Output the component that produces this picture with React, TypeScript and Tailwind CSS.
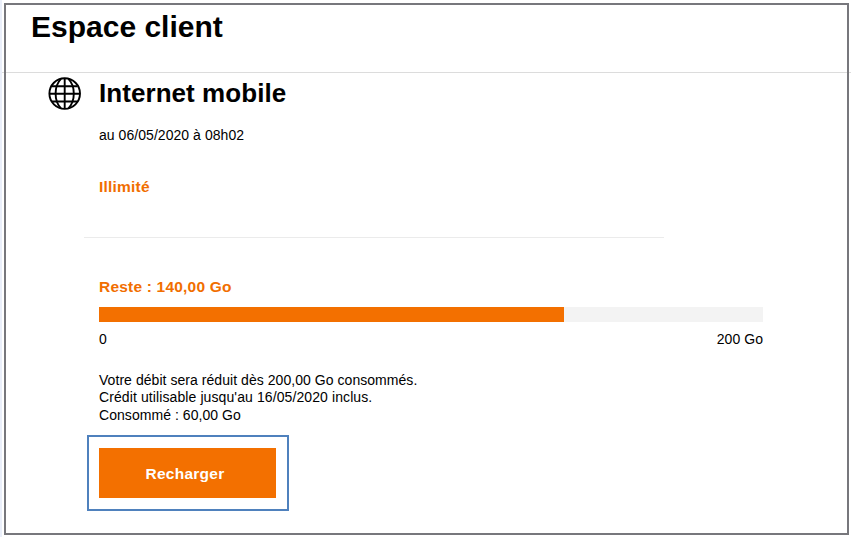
import * as React from 'react'

interface UsageProps {
  remaining: string
  percent: number
  max: string
}

function GlobeIcon() {
  return (
    <svg
      className="size-[34px] shrink-0"
      viewBox="0 0 34 34"
      fill="none"
      stroke="#000"
      strokeWidth="1.9"
    >
      <circle cx="16.7" cy="16.6" r="15.3" />
      <path d="M16.7 1.3v30.6M1.4 16.8h30.6M4 9.2h25.4M4 24.5h25.4" />
      <path d="M13 1.8C5.8 9 5.8 24 13 31.4M20.4 1.8C27.6 9 27.6 24 20.4 31.4" />
    </svg>
  )
}

function Usage({ remaining, percent, max }: UsageProps) {
  return (
    <div className="w-[664px]">
      <p className="text-[15.5px] leading-5 font-bold tracking-[0.2px] text-[#f16e00]">
        Reste : {remaining}
      </p>
      <div className="mt-2.5 h-[15px] bg-[#f3f3f3]">
        <div className="h-full bg-[#f37000]" style={{ width: `${percent}%` }} />
      </div>
      <div className="mt-2 flex justify-between text-sm leading-[18px] tracking-[0.05px]">
        <span>0</span>
        <span>{max}</span>
      </div>
    </div>
  )
}

export default function App() {
  return (
    <div className="relative h-[537px] w-[851px] overflow-hidden border-l-2 border-[#eaeffa] bg-white font-['Liberation_Sans',Arial,sans-serif] text-black">
      <header className="h-[73px] border-b border-[#dcdcdc] pt-[9px] pl-[29px]">
        <h1 className="text-[30px] leading-9 font-bold">Espace client</h1>
      </header>

      <main className="flex pt-1 pl-[46px]">
        <GlobeIcon />
        <div className="ml-[17px]">
          <h2 className="text-[26px] leading-8 font-bold tracking-[0.06px]">
            Internet mobile
          </h2>
          <p className="mt-[17px] text-sm leading-[18px] tracking-[0.05px]">
            au 06/05/2020 à 08h02
          </p>
          <p className="mt-[33px] text-[15.5px] leading-5 font-bold tracking-[0.2px] text-[#f16e00]">
            Illimité
          </p>
          <hr className="mt-10 -ml-[15px] w-[580px] border-[#ebebeb]" />

          <div className="mt-[39px]">
            <Usage remaining="140,00 Go" percent={70} max="200 Go" />
          </div>

          <div className="mt-6 text-sm leading-[17px] tracking-[0.05px]">
            <p>Votre débit sera réduit dès 200,00 Go consommés.</p>
            <p className="tracking-[0.1px]">
              Crédit utilisable jusqu'au 16/05/2020 inclus.
            </p>
            <p className="pt-px">Consommé : 60,00 Go</p>
          </div>

          <div className="mt-[10.5px] -ml-3 h-[76px] w-[202px] border-2 border-[#4f81bd] pt-[11px] pl-2.5">
            <button className="h-[50px] w-[177px] bg-[#f37000] pt-0.5 pr-[5px] text-[15.5px] font-bold tracking-[0.25px] text-white">
              Recharger
            </button>
          </div>
        </div>
      </main>

      <div className="pointer-events-none absolute top-[3px] right-[2px] bottom-[2px] left-[2px] border-2 border-[#77777c]" />
    </div>
  )
}
